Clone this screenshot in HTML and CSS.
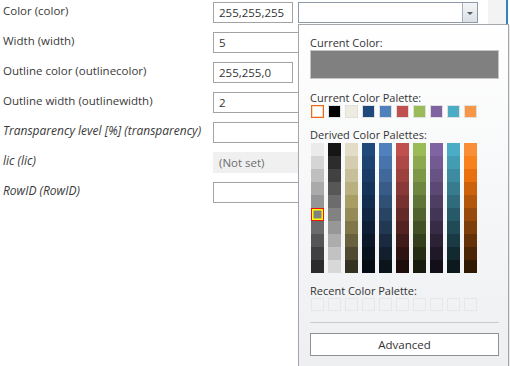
FILE: index.html
```html
<!DOCTYPE html>
<html>
<head>
<meta charset="utf-8">
<link rel="stylesheet" href="styles.css">
</head>
<body>
<div class="page">
  <div class="form">
    <div class="row">
      <div class="lbl">Color (color)</div>
      <div class="field">
        <div class="box narrow">255,255,255</div>
        <div class="combo"><div class="combo-text"></div><div class="combo-btn"><span class="arrow"></span></div></div>
      </div>
    </div>
    <div class="row">
      <div class="lbl">Width (width)</div>
      <div class="field"><div class="box wide">5</div></div>
    </div>
    <div class="row">
      <div class="lbl">Outline color (outlinecolor)</div>
      <div class="field"><div class="box narrow">255,255,0</div></div>
    </div>
    <div class="row">
      <div class="lbl">Outline width (outlinewidth)</div>
      <div class="field"><div class="box wide">2</div></div>
    </div>
    <div class="row">
      <div class="lbl italic">Transparency level [%] (transparency)</div>
      <div class="field"><div class="box wide"></div></div>
    </div>
    <div class="row">
      <div class="lbl italic">lic (lic)</div>
      <div class="field"><div class="box wide disabled">(Not set)</div></div>
    </div>
    <div class="row">
      <div class="lbl italic">RowID (RowID)</div>
      <div class="field"><div class="box wide"></div></div>
    </div>
  </div>
  <div class="side"></div>
</div>

<div class="popup">
  <div class="ptitle first">Current Color:</div>
  <div class="current"></div>

  <div class="ptitle t2">Current Color Palette:</div>
  <div class="swrow">
    <div class="sw selected" style="background:#ffffff"></div>
    <div class="sw" style="background:#000000"></div>
    <div class="sw" style="background:#eeece1"></div>
    <div class="sw" style="background:#1f497d"></div>
    <div class="sw" style="background:#4f81bd"></div>
    <div class="sw" style="background:#c0504d"></div>
    <div class="sw" style="background:#9bbb59"></div>
    <div class="sw" style="background:#8064a2"></div>
    <div class="sw" style="background:#4bacc6"></div>
    <div class="sw" style="background:#f79646"></div>
  </div>

  <div class="ptitle t3">Derived Color Palettes:</div>
  <div class="derived">
    <div class="col">
      <div class="cell" style="background:#ebebeb"></div>
      <div class="cell" style="background:#d5d5d5"></div>
      <div class="cell" style="background:#bfbfbf"></div>
      <div class="cell" style="background:#aaaaaa"></div>
      <div class="cell" style="background:#959595"></div>
      <div class="cell picked" style="background:#808080"></div>
      <div class="cell" style="background:#6b6b6b"></div>
      <div class="cell" style="background:#555555"></div>
      <div class="cell" style="background:#404040"></div>
      <div class="cell" style="background:#2b2b2b"></div>
    </div>
    <div class="col">
      <div class="cell" style="background:#161616"></div>
      <div class="cell" style="background:#2c2c2c"></div>
      <div class="cell" style="background:#414141"></div>
      <div class="cell" style="background:#575757"></div>
      <div class="cell" style="background:#6c6c6c"></div>
      <div class="cell" style="background:#828282"></div>
      <div class="cell" style="background:#979797"></div>
      <div class="cell" style="background:#adadad"></div>
      <div class="cell" style="background:#c2c2c2"></div>
      <div class="cell" style="background:#d8d8d8"></div>
    </div>
    <div class="col">
      <div class="cell" style="background:#e3ddc8"></div>
      <div class="cell" style="background:#d5cdb0"></div>
      <div class="cell" style="background:#c7bf99"></div>
      <div class="cell" style="background:#b9b07f"></div>
      <div class="cell" style="background:#a89e64"></div>
      <div class="cell" style="background:#958b56"></div>
      <div class="cell" style="background:#807649"></div>
      <div class="cell" style="background:#69603c"></div>
      <div class="cell" style="background:#4f4a31"></div>
      <div class="cell" style="background:#363222"></div>
    </div>
    <div class="col">
      <div class="cell" style="background:#1f497d"></div>
      <div class="cell" style="background:#1c4271"></div>
      <div class="cell" style="background:#193b65"></div>
      <div class="cell" style="background:#163459"></div>
      <div class="cell" style="background:#132d4e"></div>
      <div class="cell" style="background:#102642"></div>
      <div class="cell" style="background:#0d1f36"></div>
      <div class="cell" style="background:#0a182a"></div>
      <div class="cell" style="background:#07121e"></div>
      <div class="cell" style="background:#040b12"></div>
    </div>
    <div class="col">
      <div class="cell" style="background:#4f81bd"></div>
      <div class="cell" style="background:#4775ab"></div>
      <div class="cell" style="background:#40689a"></div>
      <div class="cell" style="background:#385c87"></div>
      <div class="cell" style="background:#315075"></div>
      <div class="cell" style="background:#294463"></div>
      <div class="cell" style="background:#223751"></div>
      <div class="cell" style="background:#1a2b3f"></div>
      <div class="cell" style="background:#131f2d"></div>
      <div class="cell" style="background:#0b131b"></div>
    </div>
    <div class="col">
      <div class="cell" style="background:#c0504d"></div>
      <div class="cell" style="background:#ae4846"></div>
      <div class="cell" style="background:#9b413e"></div>
      <div class="cell" style="background:#893937"></div>
      <div class="cell" style="background:#773230"></div>
      <div class="cell" style="background:#652a28"></div>
      <div class="cell" style="background:#532221"></div>
      <div class="cell" style="background:#401b1a"></div>
      <div class="cell" style="background:#2e1312"></div>
      <div class="cell" style="background:#1c0c0b"></div>
    </div>
    <div class="col">
      <div class="cell" style="background:#9bbb59"></div>
      <div class="cell" style="background:#8ca950"></div>
      <div class="cell" style="background:#7e9848"></div>
      <div class="cell" style="background:#6f8640"></div>
      <div class="cell" style="background:#607437"></div>
      <div class="cell" style="background:#51622f"></div>
      <div class="cell" style="background:#435026"></div>
      <div class="cell" style="background:#343f1e"></div>
      <div class="cell" style="background:#252d15"></div>
      <div class="cell" style="background:#171b0d"></div>
    </div>
    <div class="col">
      <div class="cell" style="background:#8064a2"></div>
      <div class="cell" style="background:#745a93"></div>
      <div class="cell" style="background:#685183"></div>
      <div class="cell" style="background:#5c4874"></div>
      <div class="cell" style="background:#4f3e64"></div>
      <div class="cell" style="background:#433555"></div>
      <div class="cell" style="background:#372b46"></div>
      <div class="cell" style="background:#2b2236"></div>
      <div class="cell" style="background:#1f1827"></div>
      <div class="cell" style="background:#130f18"></div>
    </div>
    <div class="col">
      <div class="cell" style="background:#4bacc6"></div>
      <div class="cell" style="background:#449cb3"></div>
      <div class="cell" style="background:#3d8ba0"></div>
      <div class="cell" style="background:#367b8e"></div>
      <div class="cell" style="background:#2f6b7b"></div>
      <div class="cell" style="background:#275a68"></div>
      <div class="cell" style="background:#204a55"></div>
      <div class="cell" style="background:#193a42"></div>
      <div class="cell" style="background:#122930"></div>
      <div class="cell" style="background:#0b191d"></div>
    </div>
    <div class="col">
      <div class="cell" style="background:#f88e36"></div>
      <div class="cell" style="background:#f7811c"></div>
      <div class="cell" style="background:#e8700f"></div>
      <div class="cell" style="background:#cd620d"></div>
      <div class="cell" style="background:#b2560b"></div>
      <div class="cell" style="background:#984a0c"></div>
      <div class="cell" style="background:#7e3e0a"></div>
      <div class="cell" style="background:#643108"></div>
      <div class="cell" style="background:#4a2506"></div>
      <div class="cell" style="background:#301903"></div>
    </div>
  </div>

  <div class="ptitle t4">Recent Color Palette:</div>
  <div class="swrow">
    <div class="sw empty"></div><div class="sw empty"></div><div class="sw empty"></div><div class="sw empty"></div><div class="sw empty"></div>
    <div class="sw empty"></div><div class="sw empty"></div><div class="sw empty"></div><div class="sw empty"></div><div class="sw empty"></div>
  </div>

  <div class="sep"></div>
  <div class="btn">Advanced</div>
</div>
</body>
</html>
```

FILE: styles.css
```css
* { box-sizing: border-box; }
html, body { margin: 0; padding: 0; background: #ffffff; }
body {
  font-family: "Open Sans", "Noto Sans", sans-serif;
  font-size: 11px;
  color: #333333;
  width: 510px;
  height: 366px;
  overflow: hidden;
  position: relative;
}
.page { display: flex; height: 366px; }
.form { width: 488px; }
.side {
  width: 20px;
  background: #f3f3f3;
  border-right: 2px solid #3c7fbf;
}
.row { display: flex; height: 30px; }
.lbl {
  width: 213px;
  padding: 3px 0 0 3px;
  line-height: 16px;
  font-size: 11.5px;
  white-space: nowrap;
  color: #3a3a3a;
}
.italic { font-style: italic; font-size: 12px; }
.field { display: flex; padding-top: 2px; }
.box {
  height: 21px;
  border: 1px solid #a3a3a3;
  padding: 0 0 0 5px;
  line-height: 19px;
  font-size: 11.5px;
  color: #333333;
  background: #ffffff;
}
.narrow { width: 80px; }
.wide { width: 275px; }
.disabled { background: #f0f0f0; border-color: #f0f0f0; color: #6d6d6d; }
.combo {
  margin-left: 5px;
  width: 180px;
  height: 21px;
  border: 1px solid #8d99a6;
  display: flex;
  background: #ffffff;
}
.combo-text { flex: 1; }
.combo-btn {
  width: 15px;
  border-left: 1px solid #a6b0ba;
  background: linear-gradient(#f4f5f6, #dbe0e5);
  display: flex;
  align-items: center;
  justify-content: center;
}
.arrow {
  width: 0; height: 0;
  border-left: 3px solid transparent;
  border-right: 3px solid transparent;
  border-top: 3px solid #4c5a69;
  margin-top: 1px;
}
.popup {
  position: absolute;
  left: 298px;
  top: 24px;
  width: 211px;
  border: 1px solid #a3a7ab;
  background: linear-gradient(#ffffff, #edeff1);
  padding: 10px 9px 10px 11px;
  box-shadow: 1px 1px 2px rgba(0,0,0,0.15);
}
.ptitle { line-height: 15px; height: 15px; color: #333333; white-space: nowrap; }
.t2 { margin-top: 11px; }
.t3 { margin-top: 9px; }
.t4 { margin-top: 10px; }
.current {
  height: 29px;
  border: 1px solid #c4c4c4;
  background: #808080;
}
.swrow { display: flex; gap: 4px; margin-left: 1px; }
.sw {
  width: 13px; height: 13px;
  border: 1px solid #e0e0e0;
}
.sw.selected {
  border: 1px solid #e8691b;
  box-shadow: inset 0 0 0 1px #fbd7b6;
}
.sw.empty { border-color: #e6e7e8; background: transparent; }
.derived { display: flex; gap: 4px; margin: 1px 0 0 1px; }
.col { width: 13px; display: flex; flex-direction: column; }
.cell { width: 13px; height: 13px; }
.cell.picked { border: 1px solid #ee1111; box-shadow: inset 0 0 0 1.5px #ffff00; }
.sep { margin-top: 11px; height: 1px; background: #c9cbcd; }
.btn {
  margin-top: 10px;
  height: 23px;
  border: 1px solid #8f9192;
  background: #ffffff;
  text-align: center;
  line-height: 21px;
  font-size: 11.5px;
  color: #333333;
}
```
